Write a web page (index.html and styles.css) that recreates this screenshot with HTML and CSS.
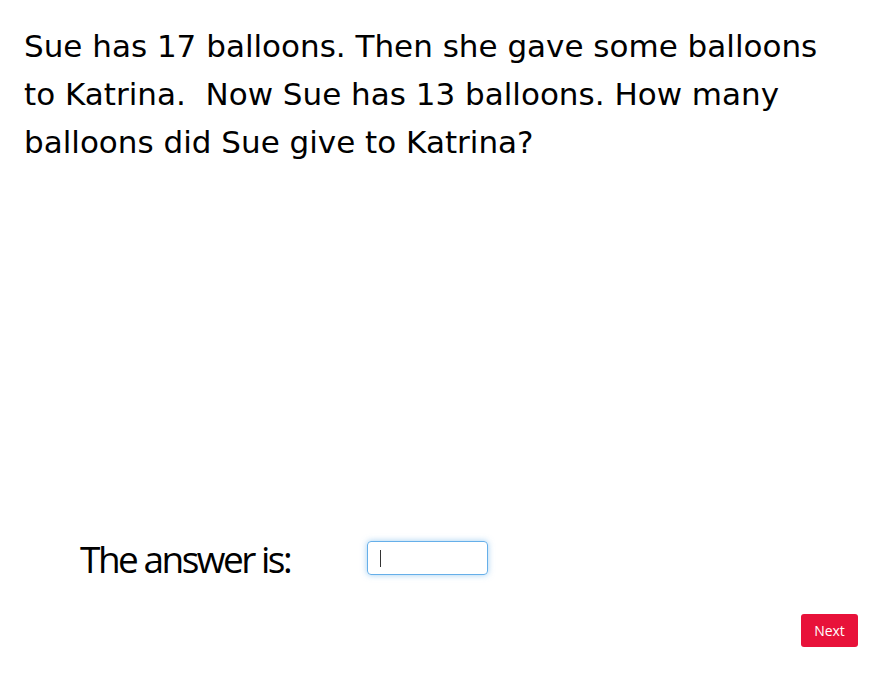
FILE: index.html
```html
<!DOCTYPE html>
<html>
<head>
<meta charset="utf-8">
<link rel="stylesheet" href="styles.css">
</head>
<body>
<div class="page">
  <p class="question">Sue has 17 balloons. Then she gave some balloons to Katrina.&nbsp; Now Sue has 13 balloons. How many balloons did Sue give to Katrina?</p>
  <div class="answer-row">
    <span class="answer-label">The answer is:</span>
    <div class="answer-input"><span class="caret"></span></div>
  </div>
  <div class="actions">
    <button class="next-btn">Next</button>
  </div>
</div>
</body>
</html>
```
FILE: styles.css
```css
html, body {
  margin: 0;
  padding: 0;
  background: #fff;
}
.page {
  width: 894px;
  height: 679px;
  display: flex;
  flex-direction: column;
}
.question {
  margin: 22px 0 0 24px;
  width: 820px;
  font-family: "DejaVu Sans", sans-serif;
  font-size: 31px;
  line-height: 48px;
  color: #000;
}
.answer-row {
  margin-top: auto;
  display: flex;
  align-items: center;
  padding-left: 80px;
  height: 34px;
}
.answer-label {
  font-family: "Open Sans", sans-serif;
  font-size: 37px;
  line-height: 36px;
  padding-top: 2px;
  letter-spacing: -2.5px;
  color: #000;
  width: 287px;
}
.answer-input {
  border: 1px solid #66afe9;
  border-radius: 4px;
  box-shadow: 0 0 6px rgba(102,175,233,0.6);
  display: flex;
  align-items: center;
  padding-left: 12px;
  box-sizing: border-box;
  width: 121px;
  height: 34px;
}
.caret {
  width: 1px;
  height: 17px;
  background: #333;
}
.actions {
  display: flex;
  justify-content: flex-end;
  padding: 39px 36px 32px 0;
}
.next-btn {
  width: 57px;
  height: 33px;
  background: #e8123a;
  color: #fff;
  border: none;
  border-radius: 3px;
  font-family: "Open Sans", sans-serif;
  font-size: 14px;
  padding: 0;
}
```
